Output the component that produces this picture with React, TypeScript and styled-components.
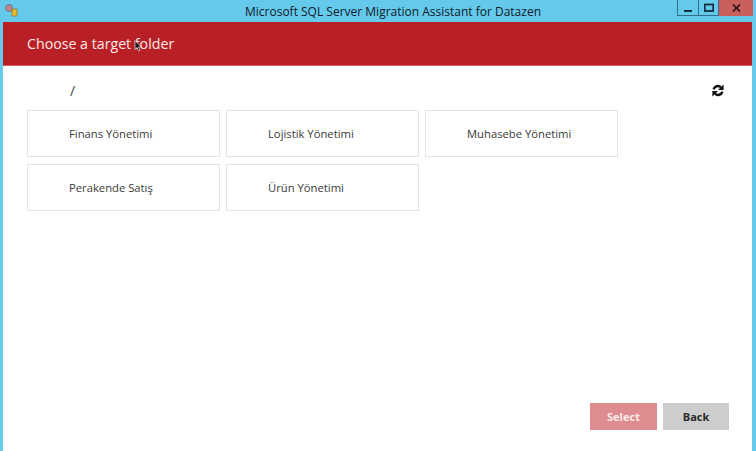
import React from 'react';
import styled, { createGlobalStyle } from 'styled-components';

const GlobalStyle = createGlobalStyle`
  html, body {
    margin: 0;
    padding: 0;
    background: #64c9ea;
  }
  * {
    box-sizing: border-box;
  }
`;

const Window = styled.div`
  position: relative;
  width: 756px;
  height: 451px;
  display: flex;
  flex-direction: column;
  background: #64c9ea;
  font-family: 'Open Sans', 'Noto Sans', sans-serif;
  overflow: hidden;
`;

const TitleBar = styled.div`
  position: relative;
  height: 22px;
  flex: none;
  display: flex;
  align-items: center;
  justify-content: center;
  padding-left: 30px;
`;

const TitleText = styled.span`
  font-size: 12px;
  color: #10202a;
`;

const AppIcon = styled.svg`
  position: absolute;
  left: 4px;
  top: 4px;
`;

const Controls = styled.div`
  position: absolute;
  top: 0;
  right: 3px;
  display: flex;
  height: 16px;
`;

const ControlButton = styled.div<{ $w: number; $close?: boolean }>`
  width: ${(p) => p.$w}px;
  height: 16px;
  display: flex;
  align-items: center;
  justify-content: center;
  background: ${(p) => (p.$close ? '#c9605c' : 'transparent')};
  border: ${(p) => (p.$close ? 'none' : '1px solid #2f6f8c')};
  border-top: none;
  margin-left: ${(p) => (p.$close ? 0 : -1)}px;
`;

const Body = styled.div`
  flex: 1;
  margin: 0 4px 0 3px;
  background: #fff;
  display: flex;
  flex-direction: column;
`;

const Header = styled.div`
  height: 44px;
  flex: none;
  background: #b92025;
  border-bottom: 1px solid #d65b5e;
  display: flex;
  align-items: center;
  padding-left: 24px;
`;

const HeaderTitle = styled.h1`
  margin: 0;
  font-size: 14.2px;
  font-weight: 400;
  color: #fbe9e9;
`;

const Content = styled.div`
  flex: 1;
  display: flex;
  flex-direction: column;
  padding: 0 23px 21px 24px;
`;

const PathRow = styled.div`
  height: 44px;
  flex: none;
  display: flex;
  align-items: center;
  justify-content: space-between;
  padding: 5px 5px 0 43px;
  color: #444;
  font-size: 14px;
`;

const TileGrid = styled.div`
  display: grid;
  grid-template-columns: repeat(3, 193px);
  grid-auto-rows: 47px;
  column-gap: 6px;
  row-gap: 7px;
`;

const Tile = styled.div`
  border: 1px solid #e4e4e4;
  display: flex;
  align-items: center;
  padding: 0 0 0 41px;
  font-size: 11.25px;
  color: #3a3a3a;
`;

const Footer = styled.div`
  margin-top: auto;
  display: flex;
  justify-content: flex-end;
  gap: 6px;
`;

const ActionButton = styled.button<{ $primary?: boolean }>`
  width: ${(p) => (p.$primary ? 67 : 66)}px;
  height: 27px;
  border: none;
  padding: 0;
  font-family: inherit;
  font-size: 11px;
  font-weight: 700;
  color: ${(p) => (p.$primary ? '#fbeaea' : '#2a2a2a')};
  background: ${(p) => (p.$primary ? '#df8c90' : '#cdcdcd')};
`;

const Cursor = styled.svg`
  position: absolute;
  left: 134px;
  top: 40px;
`;

const folders = ['Finans Yönetimi', 'Lojistik Yönetimi', 'Muhasebe Yönetimi', 'Perakende Satış', 'Ürün Yönetimi'];

export default function App() {
  return (
    <Window>
      <GlobalStyle />
      <TitleBar>
        <AppIcon width="14" height="13" viewBox="0 0 14 13">
          <circle cx="5" cy="4" r="3.5" fill="#c97f86" stroke="#5f7fa8" strokeWidth="1" />
          <rect x="8" y="5" width="5" height="7" fill="#e8b82c" stroke="#8a6a10" strokeWidth="0.6" />
        </AppIcon>
        <TitleText>Microsoft SQL Server Migration Assistant for Datazen</TitleText>
        <Controls>
          <ControlButton $w={22}>
            <svg width="10" height="10" viewBox="0 0 10 10">
              <rect x="1" y="7" width="8" height="2" fill="#10303f" />
            </svg>
          </ControlButton>
          <ControlButton $w={21}>
            <svg width="10" height="10" viewBox="0 0 10 10">
              <rect x="0.8" y="1.5" width="8.4" height="6.5" fill="none" stroke="#10303f" strokeWidth="1.8" />
            </svg>
          </ControlButton>
          <ControlButton $close $w={34}>
            <svg width="9" height="8" viewBox="0 0 9 8">
              <path d="M1 0.5 L8 7.5 M8 0.5 L1 7.5" stroke="#2a1513" strokeWidth="1.7" />
            </svg>
          </ControlButton>
        </Controls>
      </TitleBar>
      <Body>
        <Header>
          <HeaderTitle>Choose a target folder</HeaderTitle>
        </Header>
        <Content>
          <PathRow>
            <span>/</span>
            <svg width="12" height="13" viewBox="0 0 12 13">
              <path d="M1.6 5.4 A4.4 4.4 0 0 1 9 3.4" fill="none" stroke="#111" strokeWidth="2.4" />
              <path d="M11.6 0.4 V6 H6 Z" fill="#111" />
              <path d="M10.4 7.6 A4.4 4.4 0 0 1 3 9.6" fill="none" stroke="#111" strokeWidth="2.4" />
              <path d="M0.4 12.6 V7 H6 Z" fill="#111" />
            </svg>
          </PathRow>
          <TileGrid>
            {folders.map((name) => (
              <Tile key={name}>{name}</Tile>
            ))}
          </TileGrid>
          <Footer>
            <ActionButton $primary>Select</ActionButton>
            <ActionButton>Back</ActionButton>
          </Footer>
        </Content>
      </Body>
      <Cursor width="8" height="12" viewBox="0 0 8 12">
        <path d="M1 0.5 V9.5 L3 7.6 L4.6 11 L6 10.4 L4.5 7 H7.2 Z" fill="#1a1a1a" stroke="#fff" strokeWidth="0.6" />
      </Cursor>
    </Window>
  );
}
